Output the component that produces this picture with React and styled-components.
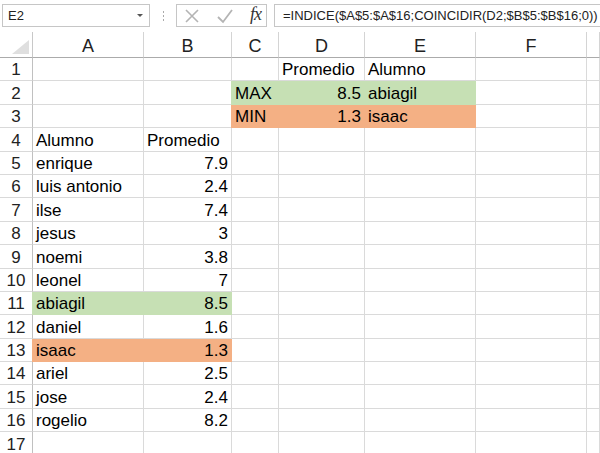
import React from 'react';
import styled, { createGlobalStyle } from 'styled-components';

const GlobalStyle = createGlobalStyle`
  html, body {
    margin: 0;
    padding: 0;
    background: #fff;
    overflow: hidden;
  }
  body {
    font-family: 'Liberation Sans', Arial, sans-serif;
  }
`;

const GREEN = '#c6e0b4';
const ORANGE = '#f4b084';

const Page = styled.div`
  width: 600px;
  height: 453px;
  overflow: hidden;
  display: flex;
  flex-direction: column;
`;

const FormulaBar = styled.div`
  height: 32px;
  flex-shrink: 0;
  display: flex;
  align-items: flex-start;
  padding-top: 4px;
  box-sizing: border-box;
`;

const NameBox = styled.div`
  margin-left: 2px;
  width: 148px;
  height: 23px;
  box-sizing: border-box;
  border: 1px solid #c6c6c6;
  display: flex;
  align-items: center;
  justify-content: space-between;
  padding: 0 6px 0 5px;
  font-size: 13px;
  color: #222;
`;

const Caret = styled.span`
  width: 0;
  height: 0;
  border-left: 3px solid transparent;
  border-right: 3px solid transparent;
  border-top: 3px solid #555;
`;

const Grip = styled.div`
  width: 26px;
  height: 23px;
  display: flex;
  flex-direction: column;
  align-items: center;
  justify-content: center;
  gap: 2px;

  span {
    width: 1px;
    height: 2px;
    background: #aaa;
  }
`;

const IconBox = styled.div`
  width: 91px;
  height: 23px;
  box-sizing: border-box;
  border: 1px solid #c6c6c6;
  display: flex;
  align-items: center;
  justify-content: space-between;
  padding: 0 5px 0 7px;
`;

const Fx = styled.span`
  font-family: 'Liberation Serif', 'Times New Roman', serif;
  font-style: italic;
  font-size: 18px;
  color: #333;
  letter-spacing: -1px;
  margin-top: -2px;
`;

const FormulaInput = styled.div`
  margin-left: 7px;
  flex: 1;
  height: 23px;
  box-sizing: border-box;
  border: 1px solid #c6c6c6;
  border-right: none;
  display: flex;
  align-items: center;
  padding-left: 8px;
  font-size: 13px;
  color: #222;
  white-space: nowrap;
`;

const Sheet = styled.div`
  flex-shrink: 0;
  display: grid;
  grid-template-columns: 33px 111px 88px 47px 86px 111px 111px 1fr;
  grid-template-rows: 26px repeat(17, 23.4px);
`;

const Corner = styled.div`
  border-right: 1px solid #c8c8c8;
  border-bottom: 1px solid #ababab;
  position: relative;
  overflow: hidden;

  &::after {
    content: '';
    position: absolute;
    right: 3px;
    bottom: 3px;
    width: 0;
    height: 0;
    border-left: 17px solid transparent;
    border-bottom: 14px solid #dfdfdf;
  }
`;

const ColHead = styled.div`
  border-right: 1px solid #d4d4d4;
  border-bottom: 1px solid #ababab;
  display: flex;
  align-items: center;
  justify-content: center;
  font-size: 18px;
  color: #222;
  padding-top: 3px;
  box-sizing: border-box;
`;

const RowHead = styled.div`
  border-right: 1px solid #c0c0c0;
  border-bottom: 1px solid #d9d9d9;
  display: flex;
  align-items: flex-end;
  justify-content: center;
  font-size: 17px;
  color: #222;
  box-sizing: border-box;
`;

const Cell = styled.div`
  border-right: 1px solid ${(p) => p.$fill || '#dadada'};
  border-bottom: 1px solid ${(p) => p.$fill || '#dadada'};
  background: ${(p) => p.$fill || '#fff'};
  box-shadow: ${(p) => (p.$fill ? `-1px 0 0 ${p.$fill}` : 'none')};
  display: flex;
  align-items: flex-end;
  justify-content: ${(p) => (p.$num ? 'flex-end' : 'flex-start')};
  padding: 0 3px 0 3px;
  box-sizing: border-box;
  font-size: 17px;
  color: #000;
  white-space: nowrap;
  overflow: visible;
`;

const cols = ['A', 'B', 'C', 'D', 'E', 'F', 'G'];

const rows = [
  { D: 'Promedio', E: 'Alumno' },
  { C: 'MAX', D: 8.5, E: 'abiagil', fill: { C: GREEN, D: GREEN, E: GREEN } },
  { C: 'MIN', D: 1.3, E: 'isaac', fill: { C: ORANGE, D: ORANGE, E: ORANGE } },
  { A: 'Alumno', B: 'Promedio' },
  { A: 'enrique', B: 7.9 },
  { A: 'luis antonio', B: 2.4 },
  { A: 'ilse', B: 7.4 },
  { A: 'jesus', B: 3 },
  { A: 'noemi', B: 3.8 },
  { A: 'leonel', B: 7 },
  { A: 'abiagil', B: 8.5, fill: { A: GREEN, B: GREEN } },
  { A: 'daniel', B: 1.6 },
  { A: 'isaac', B: 1.3, fill: { A: ORANGE, B: ORANGE } },
  { A: 'ariel', B: 2.5 },
  { A: 'jose', B: 2.4 },
  { A: 'rogelio', B: 8.2 },
  {},
];

const CrossIcon = () => (
  <svg width="16" height="16" viewBox="0 0 16 16">
    <path d="M2 2 L14 14 M14 2 L2 14" stroke="#b4b4b4" strokeWidth="1.6" fill="none" />
  </svg>
);

const CheckIcon = () => (
  <svg width="18" height="16" viewBox="0 0 18 16">
    <path d="M2 9 L7 14 L16 2" stroke="#b4b4b4" strokeWidth="1.8" fill="none" />
  </svg>
);

export default function App() {
  return (
    <Page>
      <GlobalStyle />
      <FormulaBar>
        <NameBox>
          E2
          <Caret />
        </NameBox>
        <Grip>
          <span />
          <span />
          <span />
        </Grip>
        <IconBox>
          <CrossIcon />
          <CheckIcon />
          <Fx>fx</Fx>
        </IconBox>
        <FormulaInput>=INDICE($A$5:$A$16;COINCIDIR(D2;$B$5:$B$16;0))</FormulaInput>
      </FormulaBar>
      <Sheet>
        <Corner />
        {cols.map((c) => (
          <ColHead key={c}>{c === 'G' ? '' : c}</ColHead>
        ))}
        {rows.map((r, i) => (
          <React.Fragment key={i}>
            <RowHead>{i + 1}</RowHead>
            {cols.map((c) => {
              const v = r[c];
              const fill = r.fill && r.fill[c];
              return (
                <Cell key={c} $fill={fill} $num={typeof v === 'number'}>
                  {v}
                </Cell>
              );
            })}
          </React.Fragment>
        ))}
      </Sheet>
    </Page>
  );
}
